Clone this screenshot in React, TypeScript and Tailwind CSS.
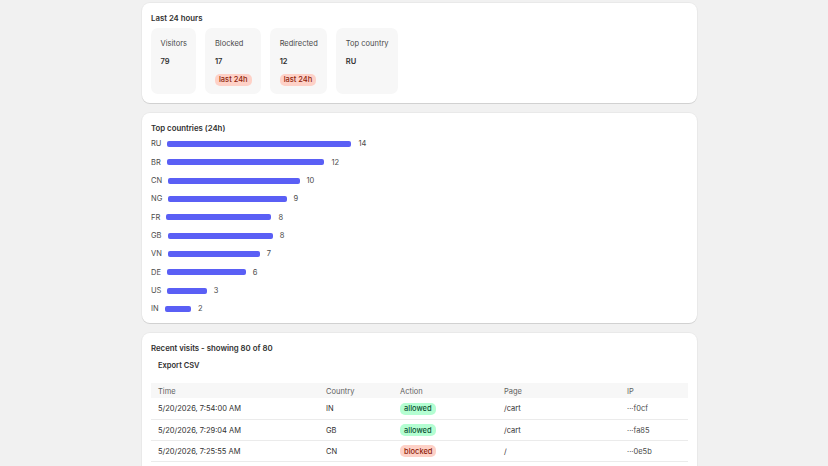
import React from 'react';

const stats = [
  { label: 'Visitors', value: '79', badge: false },
  { label: 'Blocked', value: '17', badge: true },
  { label: 'Redirected', value: '12', badge: true },
  { label: 'Top country', value: 'RU', badge: false },
];

const countries = [
  { code: 'RU', count: 14 },
  { code: 'BR', count: 12 },
  { code: 'CN', count: 10 },
  { code: 'NG', count: 9 },
  { code: 'FR', count: 8 },
  { code: 'GB', count: 8 },
  { code: 'VN', count: 7 },
  { code: 'DE', count: 6 },
  { code: 'US', count: 3 },
  { code: 'IN', count: 2 },
];

const visits = [
  { time: '5/20/2026, 7:54:00 AM', country: 'IN', action: 'allowed', page: '/cart', ip: '···f0cf' },
  { time: '5/20/2026, 7:29:04 AM', country: 'GB', action: 'allowed', page: '/cart', ip: '···fa85' },
  { time: '5/20/2026, 7:25:55 AM', country: 'CN', action: 'blocked', page: '/', ip: '···0e5b' },
];

function Card({ children }: { children: React.ReactNode }) {
  return (
    <div className="bg-white rounded-[8px] shadow-[0_1px_0_rgba(0,0,0,0.1),0_0_0_1px_rgba(0,0,0,0.03)] px-[9px] pt-[10px] pb-[9px]">
      {children}
    </div>
  );
}

function Badge({ tone, children }: { tone: 'red' | 'green'; children: React.ReactNode }) {
  return (
    <span
      className={`inline-flex items-center h-[12px] px-[4px] rounded-[5px] text-[7.5px] font-medium leading-none ${
        tone === 'red' ? 'bg-[#fed1c7] text-[#8e1f0b]' : 'bg-[#b4fed2] text-[#0c5132]'
      }`}
    >
      {children}
    </span>
  );
}

export default function App() {
  return (
    <div className="min-h-screen bg-[#f1f1f1] text-[#303030] font-['Inter',sans-serif] text-[7.5px]">
      <div className="ml-[142px] w-[555px] pt-[3px] flex flex-col gap-[10px]">
        {/* Last 24 hours */}
        <Card>
          <h2 className="font-semibold text-[7.8px] leading-[10px]">Last 24 hours</h2>
          <div className="flex gap-[9px] mt-[5px]">
            {stats.map((s) => (
              <div key={s.label} className="bg-[#f7f7f7] rounded-[7px] px-[9.5px] pt-[10px] pb-[8px] flex flex-col">
                <span className="leading-[12px] text-[#4a4a4a]">{s.label}</span>
                <span className="leading-[12px] mt-[6px] font-semibold">{s.value}</span>
                {s.badge && (
                  <span className="mt-[6px]">
                    <Badge tone="red">last 24h</Badge>
                  </span>
                )}
              </div>
            ))}
          </div>
        </Card>

        {/* Top countries */}
        <Card>
          <h2 className="font-semibold text-[7.8px] leading-[10px]">Top countries (24h)</h2>
          <div className="mt-[2px] -mb-[4px]">
            {countries.map((c) => (
              <div key={c.code} className="flex items-center gap-[6px] h-[18.33px]">
                <span className="text-[#4a4a4a] leading-none">{c.code}</span>
                <div
                  className="h-[6px] rounded-[2px] bg-[#5a5ff5]"
                  style={{ width: `${(c.count / 14) * 184}px` }}
                />
                <span className="ml-[1px] text-[#4a4a4a] leading-none">{c.count}</span>
              </div>
            ))}
          </div>
        </Card>

        {/* Recent visits */}
        <Card>
          <h2 className="font-semibold text-[7.8px] leading-[10px]">Recent visits - showing 80 of 80</h2>
          <button className="mt-[4px] h-[16px] px-[7px] font-semibold leading-none rounded-[5px]">
            Export CSV
          </button>
          <table className="mt-[10px] w-full border-collapse text-left">
            <thead>
              <tr className="bg-[#f7f7f7] h-[15px] text-[#616161]">
                <th className="font-normal pl-[7px] pt-[1px] w-[168px]">Time</th>
                <th className="font-normal pl-[7px] pt-[1px] w-[74px]">Country</th>
                <th className="font-normal pl-[7px] pt-[1px] w-[104px]">Action</th>
                <th className="font-normal pl-[7px] pt-[1px] w-[123px]">Page</th>
                <th className="font-normal pl-[7px] pt-[1px]">IP</th>
              </tr>
            </thead>
            <tbody>
              {visits.map((v) => (
                <tr key={v.time} className="h-[21px] border-b border-[#ebebeb]">
                  <td className="pl-[7px] pt-[1px]">{v.time}</td>
                  <td className="pl-[7px] pt-[1px]">{v.country}</td>
                  <td className="pl-[7px] pt-[1px]">
                    <Badge tone={v.action === 'allowed' ? 'green' : 'red'}>{v.action}</Badge>
                  </td>
                  <td className="pl-[7px] pt-[1px]">{v.page}</td>
                  <td className="pl-[7px] pt-[1px] text-[#4a4a4a]">{v.ip}</td>
                </tr>
              ))}
            </tbody>
          </table>
          <div className="h-[40px]" />
        </Card>
      </div>
    </div>
  );
}
